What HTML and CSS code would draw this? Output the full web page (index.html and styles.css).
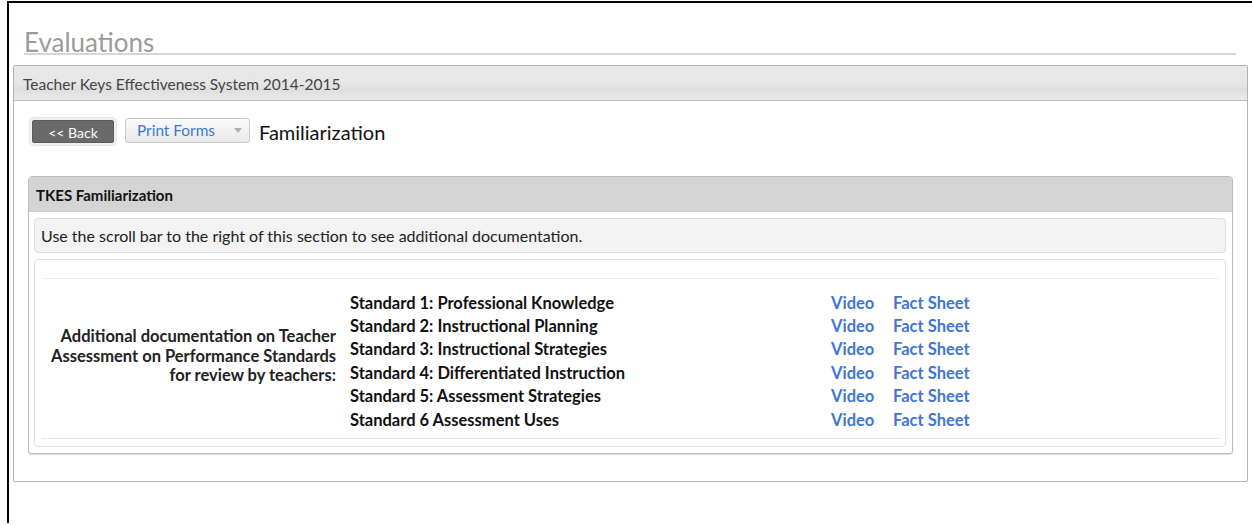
FILE: index.html
```html
<!DOCTYPE html>
<html lang="en">
<head>
<meta charset="utf-8">
<title>Evaluations</title>
<link rel="stylesheet" href="styles.css">
</head>
<body>
<div class="frame">
  <h1 class="page-title">Evaluations</h1>

  <section class="panel">
    <header class="panel-head">Teacher Keys Effectiveness System 2014-2015</header>
    <div class="panel-body">
      <div class="toolbar">
        <button class="btn-back" type="button">&lt;&lt; Back</button>
        <button class="btn-menu" type="button">
          <span class="btn-menu-label">Print Forms</span>
          <span class="caret"></span>
        </button>
        <span class="toolbar-title">Familiarization</span>
      </div>

      <section class="subpanel">
        <header class="subpanel-head">TKES Familiarization</header>
        <div class="subpanel-body">
          <div class="notice">Use the scroll bar to the right of this section to see additional documentation.</div>
          <div class="docs">
            <div class="docs-scroll">
              <div class="docs-viewport">
                <div class="docs-grid">
                  <div class="docs-label">Additional documentation on Teacher Assessment on Performance Standards for review by teachers:</div>
                  <div class="std">Standard 1: Professional Knowledge</div>
                  <a class="link" href="#">Video</a>
                  <a class="link" href="#">Fact Sheet</a>
                  <div class="std">Standard 2: Instructional Planning</div>
                  <a class="link" href="#">Video</a>
                  <a class="link" href="#">Fact Sheet</a>
                  <div class="std">Standard 3: Instructional Strategies</div>
                  <a class="link" href="#">Video</a>
                  <a class="link" href="#">Fact Sheet</a>
                  <div class="std">Standard 4: Differentiated Instruction</div>
                  <a class="link" href="#">Video</a>
                  <a class="link" href="#">Fact Sheet</a>
                  <div class="std">Standard 5: Assessment Strategies</div>
                  <a class="link" href="#">Video</a>
                  <a class="link" href="#">Fact Sheet</a>
                  <div class="std">Standard 6 Assessment Uses</div>
                  <a class="link" href="#">Video</a>
                  <a class="link" href="#">Fact Sheet</a>
                </div>
              </div>
            </div>
          </div>
        </div>
      </section>
    </div>
  </section>
</div>
</body>
</html>
```

FILE: styles.css
```css
html, body {
  margin: 0;
  padding: 0;
  background: #fff;
}

body {
  font-family: Lato, "Open Sans", sans-serif;
  color: #222;
}

.frame {
  margin: 1px 0 0 7px;
  border-left: 2px solid #000;
  border-top: 2px solid #000;
  height: 522px;
  box-sizing: border-box;
  padding: 0 4px 0 4px;
}

.page-title {
  margin: 28px 12px 10px 11px;
  font-size: 26px;
  line-height: 22px;
  font-weight: 400;
  color: #9b9b9b;
  border-bottom: 2px solid #d6d6d6;
}

/* outer panel */
.panel {
  border: 1px solid #b3b3b3;
  border-radius: 2px;
  background: #fff;
}

.panel-head {
  height: 34px;
  line-height: 36px;
  padding-left: 9px;
  font-size: 15.5px;
  color: #444;
  background: linear-gradient(#e9e9e9 0%, #e6e6e6 50%, #dedede 70%, #ebebeb 100%);
  border-bottom: 1px solid #bdbdbd;
}

.panel-body {
  padding: 17px 14px 27px 14px;
}

/* toolbar */
.toolbar {
  display: flex;
  align-items: center;
  height: 25px;
  padding-left: 4px;
}

.btn-back {
  width: 82px;
  height: 23px;
  margin-top: 2px;
  padding: 2px 0 0;
  border: 1px solid #5c5c5c;
  border-radius: 2px;
  background: #6a6a6a;
  color: #fff;
  font-family: inherit;
  font-size: 14px;
  box-shadow: 0 0 0 2px #f1f1f1, 0 0 1px 3px #e4e4e4;
}

.btn-menu {
  display: flex;
  align-items: center;
  justify-content: space-between;
  width: 125px;
  height: 25px;
  margin-left: 11px;
  padding: 0 7px 0 11px;
  border: 1px solid #c9c9c9;
  border-radius: 3px;
  background: linear-gradient(#fafafa, #e9e9e9);
  color: #3d78d5;
  font-family: inherit;
  font-size: 15.4px;
  box-sizing: border-box;
}

.btn-menu-label {
  margin-top: -2px;
}

.caret {
  width: 0;
  height: 0;
  border-left: 4px solid transparent;
  border-right: 4px solid transparent;
  border-top: 5px solid #b0b0b0;
}

.toolbar-title {
  margin-left: 9px;
  margin-top: 3px;
  font-size: 20px;
  color: #111;
}

/* inner panel */
.subpanel {
  margin-top: 33px;
  border: 1px solid #bcbcbc;
  border-radius: 4px 4px 3px 3px;
  box-shadow: 0 1px 1px #ddd;
}

.subpanel-head {
  height: 35px;
  line-height: 36px;
  padding-left: 7px;
  font-size: 15px;
  font-weight: 700;
  color: #111;
  background: #d4d4d4;
  border-radius: 3px 3px 0 0;
}

.subpanel-body {
  padding: 6px 6px 6px 5px;
}

.notice {
  height: 33px;
  line-height: 34px;
  padding-left: 6px;
  font-size: 16px;
  color: #222;
  background: #f3f3f3;
  border: 1px solid #dcdcdc;
  border-radius: 4px;
}

.docs {
  margin-top: 6px;
  border: 1px solid #dedede;
  border-radius: 4px;
  padding: 18px 6px 7px 7px;
}

.docs-scroll {
  border-top: 1px solid #efefef;
  border-bottom: 1px solid #e8e8e8;
  padding-bottom: 10px;
}

.docs-viewport {
  height: 149px;
  overflow: hidden;
}

.docs-grid {
  display: grid;
  grid-template-columns: 308px 481px 62px 1fr;
  grid-auto-rows: 23.4px;
  padding-top: 12px;
  align-items: center;
  font-size: 16.5px;
  font-weight: 700;
}

.docs-label {
  grid-row: 1 / span 6;
  grid-column: 1;
  align-self: start;
  margin-top: 36px;
  padding-right: 14px;
  text-align: right;
  line-height: 19.5px;
  font-weight: 700;
  color: #222;
}

.std {
  grid-column: 2;
  color: #111;
}

.link {
  color: #3f76d3;
  text-decoration: none;
}
```
